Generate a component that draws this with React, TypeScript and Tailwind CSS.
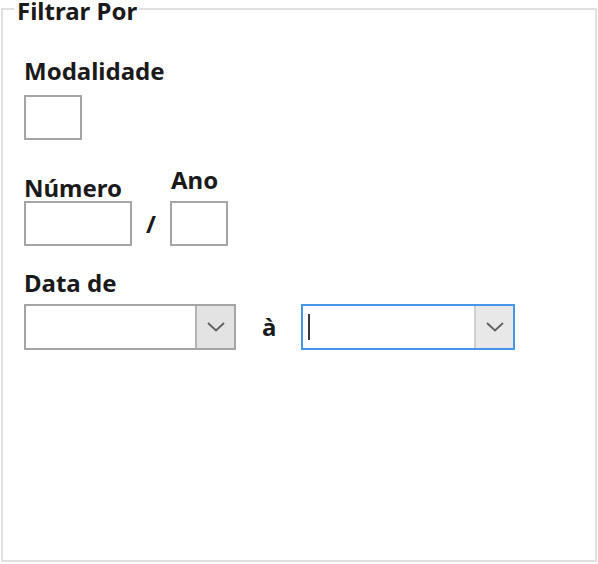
import React from "react";

function Chevron() {
  return (
    <svg width="18" height="10" viewBox="0 0 18 10" fill="none">
      <polyline points="1,1 9,8.5 17,1" stroke="#5f5f5f" strokeWidth="1.8" fill="none" />
    </svg>
  );
}

export default function App() {
  return (
    <div className="w-[598px] h-[564px] bg-white pt-[8px] pl-[1px] font-['Noto_Sans',sans-serif] font-bold text-[24px] leading-[20px] text-[#1a1a1a]">
      <div className="relative w-[596px] h-[554px] border-2 border-[#e0e0e0] pt-[51px] pl-[21px] flex flex-col items-start">
        <div className="absolute left-[11px] top-[-9px] bg-white pl-[3px] pr-[2px] leading-[20px]">Filtrar Por</div>

        <div>Modalidade</div>
        <div className="mt-[14px] w-[58px] h-[45px] border-2 border-[#a5a5a5] bg-white" />

        <div className="mt-[30px] flex items-end">
          <div className="flex flex-col items-start">
            <div>Número</div>
            <div className="mt-[3px] w-[108px] h-[45px] border-2 border-[#a5a5a5] bg-white" />
          </div>
          <div className="w-[38px] text-center mb-[12px]">/</div>
          <div className="flex flex-col items-start">
            <div className="pl-[1px]">Ano</div>
            <div className="mt-[11px] w-[58px] h-[45px] border-2 border-[#a5a5a5] bg-white" />
          </div>
        </div>

        <div className="mt-[27px]">Data de</div>
        <div className="mt-[11px] flex items-center">
          <div className="w-[212px] h-[46px] border-2 border-[#a5a5a5] bg-white flex justify-end">
            <div className="w-[39px] h-full bg-[#e3e3e3] border-l-2 border-[#b3b3b3] flex items-center justify-center">
              <Chevron />
            </div>
          </div>
          <div className="ml-[26px] w-[15px]">à</div>
          <div className="ml-[24px] w-[214px] h-[46px] border-2 border-[#4596ea] bg-white flex items-center">
            <div className="ml-[5px] w-[2px] h-[26px] bg-[#3a3a3a]" />
            <div className="ml-auto w-[39px] h-full bg-[#e8e8e8] border-l-2 border-[#cfcfcf] flex items-center justify-center">
              <Chevron />
            </div>
          </div>
        </div>
      </div>
    </div>
  );
}
